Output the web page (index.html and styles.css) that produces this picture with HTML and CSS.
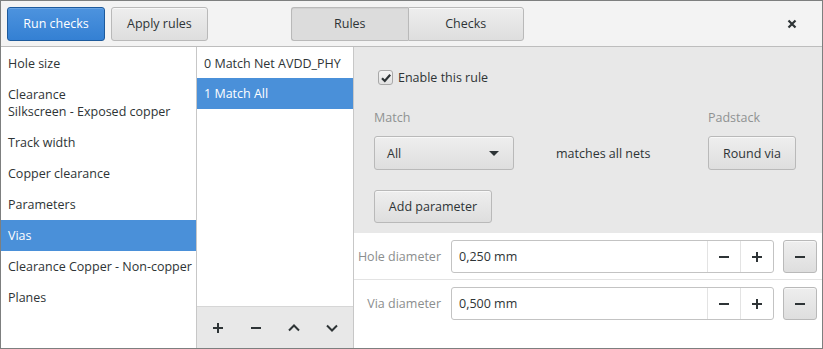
FILE: index.html
```html
<!DOCTYPE html>
<html lang="en">
<head>
<meta charset="UTF-8">
<title>Rules</title>
<link rel="stylesheet" href="styles.css">
</head>
<body>
    <div class="window">
        <!-- Header bar -->
        <div class="headerbar">
            <button class="btn btn-suggested">Run checks</button>
            <button class="btn">Apply rules</button>
            <div class="switcher">
                <button class="btn switch active">Rules</button>
                <button class="btn switch">Checks</button>
            </div>
            <button class="close" aria-label="Close">
                <svg width="10" height="10" viewBox="0 0 10 10"><path d="M1.5 1.5 L8.5 8.5 M8.5 1.5 L1.5 8.5" stroke="#2e3436" stroke-width="2.2" fill="none"/></svg>
            </button>
        </div>

        <div class="content">
            <!-- Rule types -->
            <ul class="sidebar">
                <li>Hole size</li>
                <li>Clearance<br>Silkscreen - Exposed copper</li>
                <li>Track width</li>
                <li>Copper clearance</li>
                <li>Parameters</li>
                <li class="selected">Vias</li>
                <li>Clearance Copper - Non-copper</li>
                <li>Planes</li>
            </ul>

            <!-- Rules of the selected type -->
            <div class="rule-list">
                <ul class="rules">
                    <li>0 Match Net AVDD_PHY</li>
                    <li class="selected">1 Match All</li>
                </ul>
                <div class="list-toolbar">
                    <button class="tool"><svg width="12" height="12" viewBox="0 0 12 12"><path d="M6 1 V11 M1 6 H11" stroke="#2e3436" stroke-width="2" fill="none"/></svg></button>
                    <button class="tool"><svg width="12" height="12" viewBox="0 0 12 12"><path d="M1 6 H11" stroke="#2e3436" stroke-width="2" fill="none"/></svg></button>
                    <button class="tool"><svg width="14" height="12" viewBox="0 0 14 12"><path d="M2 8.5 L7 3.5 L12 8.5" stroke="#2e3436" stroke-width="2" fill="none"/></svg></button>
                    <button class="tool"><svg width="14" height="12" viewBox="0 0 14 12"><path d="M2 3.5 L7 8.5 L12 3.5" stroke="#2e3436" stroke-width="2" fill="none"/></svg></button>
                </div>
            </div>

            <!-- Rule editor -->
            <div class="editor">
                <div class="editor-top">
                    <label class="check">
                        <span class="check-box">
                            <svg width="12" height="12" viewBox="0 0 12 12"><path d="M2 6.2 L4.8 9 L10.2 2.8" stroke="#2e3436" stroke-width="2.2" fill="none"/></svg>
                        </span>
                        Enable this rule
                    </label>
                    <div class="match-grid">
                        <div class="field-label">Match</div>
                        <div></div>
                        <div class="field-label">Padstack</div>
                        <button class="btn combo">All <span class="arrow"></span></button>
                        <div class="match-desc">matches all nets</div>
                        <button class="btn padstack">Round via</button>
                    </div>
                    <button class="btn add-param">Add parameter</button>
                </div>
                <div class="params">
                    <div class="param-row">
                        <div class="param-label">Hole diameter</div>
                        <div class="spin">
                            <span class="spin-value">0,250 mm</span>
                            <span class="spin-btn"><svg width="12" height="12" viewBox="0 0 12 12"><path d="M1 6 H11" stroke="#2e3436" stroke-width="2" fill="none"/></svg></span>
                            <span class="spin-btn"><svg width="12" height="12" viewBox="0 0 12 12"><path d="M6 1 V11 M1 6 H11" stroke="#2e3436" stroke-width="2" fill="none"/></svg></span>
                        </div>
                        <button class="btn remove"><svg width="12" height="12" viewBox="0 0 12 12"><path d="M1 6 H11" stroke="#2e3436" stroke-width="2" fill="none"/></svg></button>
                    </div>
                    <div class="param-row">
                        <div class="param-label">Via diameter</div>
                        <div class="spin">
                            <span class="spin-value">0,500 mm</span>
                            <span class="spin-btn"><svg width="12" height="12" viewBox="0 0 12 12"><path d="M1 6 H11" stroke="#2e3436" stroke-width="2" fill="none"/></svg></span>
                            <span class="spin-btn"><svg width="12" height="12" viewBox="0 0 12 12"><path d="M6 1 V11 M1 6 H11" stroke="#2e3436" stroke-width="2" fill="none"/></svg></span>
                        </div>
                        <button class="btn remove"><svg width="12" height="12" viewBox="0 0 12 12"><path d="M1 6 H11" stroke="#2e3436" stroke-width="2" fill="none"/></svg></button>
                    </div>
                </div>
            </div>
        </div>
    </div>
</body>
</html>
```

FILE: styles.css
```css
* {
    box-sizing: border-box;
}
body {
    margin: 0;
    font-family: "Open Sans", "Noto Sans", sans-serif;
    font-size: 12.5px;
    color: #2e3436;
}
.window {
    width: 823px;
    height: 349px;
    border: 1px solid #7d7f7f;
    display: flex;
    flex-direction: column;
    overflow: hidden;
}
.headerbar {
    height: 46px;
    flex-shrink: 0;
    display: flex;
    align-items: center;
    padding: 0 6px;
    background-color: #f3f3f3;
    border-bottom: 1px solid #bdbdbd;
}
.btn {
    font-family: inherit;
    font-size: inherit;
    color: #2e3436;
    height: 34px;
    padding: 0 15px;
    border: 1px solid #b9b9b9;
    border-radius: 3px;
    background: linear-gradient(to bottom, #eeeeee, #dedede);
    box-shadow: inset 0 1px #f8f8f8;
    cursor: pointer;
}
.headerbar .btn {
    margin-right: 6px;
}
.btn-suggested {
    width: 98px;
    color: #fff;
    border-color: #1d5a9c;
    background: linear-gradient(to bottom, #4d93de, #3480d3);
    box-shadow: inset 0 1px #6aa4e3;
}
.switcher {
    display: flex;
    margin-left: 77px;
}
.headerbar .switch {
    margin: 0;
    width: 117px;
}
.switch:first-child {
    border-radius: 3px 0 0 3px;
    border-right: none;
}
.headerbar .switch:last-child {
    border-radius: 0 3px 3px 0;
    width: 116px;
}
.switch.active {
    background: #dcdcdc;
    box-shadow: inset 0 1px 1px rgba(0, 0, 0, 0.06);
}
.close {
    margin-left: auto;
    margin-right: 11px;
    width: 26px;
    height: 26px;
    border: none;
    background: transparent;
    display: flex;
    align-items: center;
    justify-content: center;
}
.content {
    flex: 1;
    display: flex;
    min-height: 0;
}
ul {
    list-style: none;
    margin: 0;
    padding: 0;
}
.sidebar {
    width: 196px;
    flex-shrink: 0;
    background: #fff;
    border-right: 1px solid #c7c7c7;
}
.sidebar li,
.rules li {
    padding: 7px 0 7px 7px;
    line-height: 17px;
    white-space: nowrap;
}
.sidebar li:first-child,
.rules li:first-child {
    padding-top: 8px;
    padding-bottom: 6px;
}
.sidebar li:nth-child(2) {
    padding-top: 8px;
    padding-bottom: 7px;
}
.selected {
    background: #4a90d9;
    color: #fff;
}
.rule-list {
    width: 157px;
    flex-shrink: 0;
    display: flex;
    flex-direction: column;
    background: #fff;
    border-right: 1px solid #c7c7c7;
}
.rules {
    flex: 1;
}
.list-toolbar {
    height: 42px;
    display: flex;
    align-items: center;
    padding: 0 2px;
    background: #e8e8e8;
    border-top: 1px solid #d6d6d6;
}
.tool {
    flex: 1;
    height: 30px;
    border: none;
    background: transparent;
    display: flex;
    align-items: center;
    justify-content: center;
}
.editor {
    flex: 1;
    display: flex;
    flex-direction: column;
    background: #fff;
}
.editor-top {
    background: #e8e8e8;
    padding: 22px 26px 10px 20px;
    height: 186px;
}
.check {
    display: flex;
    align-items: center;
    gap: 5px;
    margin-left: 4px;
}
.check-box {
    width: 15px;
    height: 15px;
    border: 1px solid #a8a8a8;
    border-radius: 3px;
    background: linear-gradient(to bottom, #f4f4f4, #e2e2e2);
    display: flex;
    align-items: center;
    justify-content: center;
}
.match-grid {
    display: grid;
    grid-template-columns: 140px 1fr 88px;
    row-gap: 10px;
    margin-top: 23px;
    align-items: center;
}
.field-label {
    color: #8f9292;
}
.combo {
    text-align: left;
    padding: 0 12px;
    display: flex;
    align-items: center;
    justify-content: space-between;
}
.arrow {
    width: 0;
    height: 0;
    border-left: 5px solid transparent;
    border-right: 5px solid transparent;
    border-top: 5px solid #2e3436;
    margin-right: 2px;
}
.match-desc {
    padding-left: 42px;
}
.padstack {
    padding: 0;
}
.add-param {
    margin-top: 20px;
    width: 118px;
    padding: 0;
    height: 33px;
}
.params {
    flex: 1;
}
.param-row {
    display: grid;
    grid-template-columns: 87px 1fr 34px;
    column-gap: 9px;
    align-items: center;
    padding: 7px 5px 6px 0;
    border-bottom: 1px solid #e3e3e3;
}
.param-row:last-child {
    border-bottom: none;
}
.param-label {
    text-align: right;
    color: #8b8e8e;
}
.spin {
    margin-left: 1px;
    height: 33px;
    display: flex;
    border: 1px solid #c3c3c3;
    border-radius: 3px;
    background: #fff;
}
.spin-value {
    flex: 1;
    display: flex;
    align-items: center;
    padding-left: 7px;
}
.spin-btn {
    width: 33px;
    display: flex;
    align-items: center;
    justify-content: center;
    border-left: 1px solid #e3e3e3;
}
.remove {
    height: 33px;
    padding: 0;
    display: flex;
    align-items: center;
    justify-content: center;
}
```
